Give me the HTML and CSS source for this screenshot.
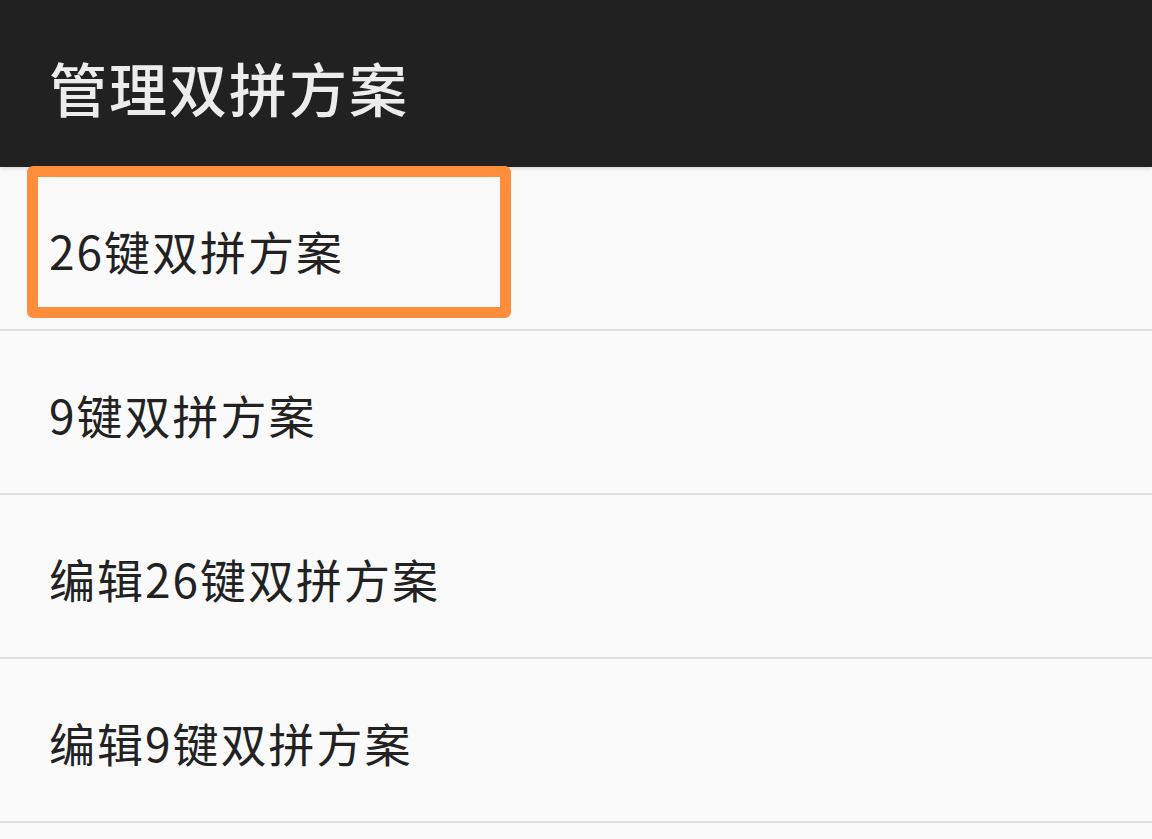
FILE: index.html
```html
<!DOCTYPE html>
<html lang="zh-CN">
<head>
<meta charset="utf-8">
<title>管理双拼方案</title>
<link rel="stylesheet" href="styles.css">
</head>
<body>
<header class="appbar">
  <h1 class="appbar-title">管理双拼方案</h1>
</header>
<ul class="menu">
  <li class="menu-item menu-item--marked"><span class="menu-label">26键双拼方案</span><span class="mark"></span></li>
  <li class="menu-item"><span class="menu-label">9键双拼方案</span></li>
  <li class="menu-item"><span class="menu-label">编辑26键双拼方案</span></li>
  <li class="menu-item"><span class="menu-label">编辑9键双拼方案</span></li>
</ul>
</body>
</html>
```

FILE: styles.css
```css
* { box-sizing: border-box; }
html, body {
  margin: 0;
  padding: 0;
  background: #fafafa;
  font-family: "Noto Sans CJK SC", "Noto Sans", sans-serif;
}
.appbar {
  position: relative;
  z-index: 1;
  height: 167px;
  background: #212121;
  display: flex;
  align-items: center;
  padding: 6px 0 0 49px;
  box-shadow: 0 2px 4px rgba(0, 0, 0, 0.12);
}
.appbar-title {
  margin: 0;
  font-size: 58px;
  font-weight: 500;
  color: #ececec;
  letter-spacing: 2px;
  line-height: 1;
}
.menu {
  list-style: none;
  margin: 0;
  padding: 0;
}
.menu-item {
  position: relative;
  height: 164px;
  display: flex;
  align-items: center;
  padding: 4px 0 0 49px;
  border-bottom: 2px solid #dddddd;
}
.menu-label {
  font-size: 46px;
  line-height: 1;
  color: #222222;
  letter-spacing: 2px;
}
.mark {
  position: absolute;
  z-index: 2;
  left: 27px;
  top: -1px;
  width: 484px;
  height: 152px;
  border: 11px solid #ff8e3c;
  border-radius: 6px;
}
```
